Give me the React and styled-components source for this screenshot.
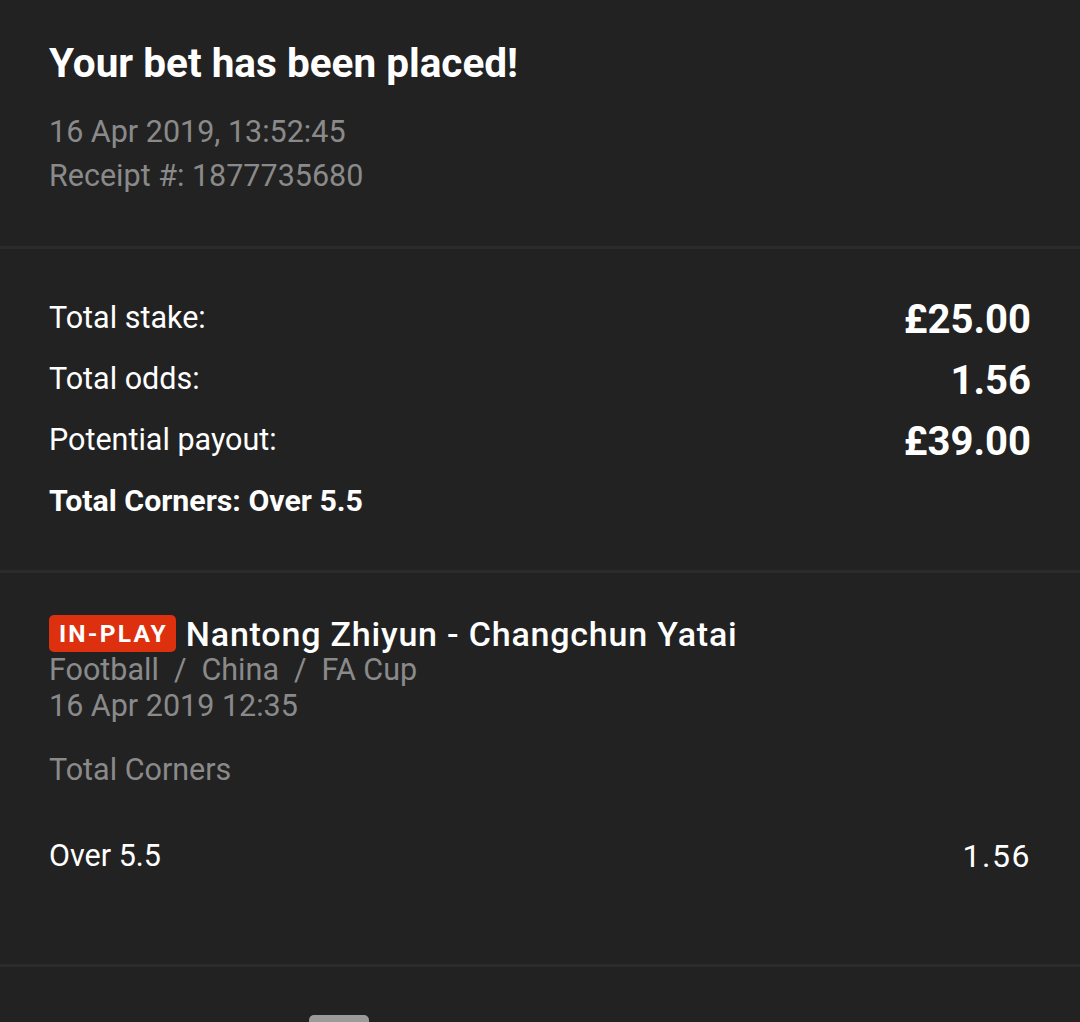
import React from 'react';
import styled, { createGlobalStyle } from 'styled-components';

const GlobalStyle = createGlobalStyle`
  html, body {
    margin: 0;
    padding: 0;
    background: #222222;
  }
  body {
    font-family: Roboto, 'Liberation Sans', sans-serif;
    color: #ffffff;
    -webkit-font-smoothing: antialiased;
  }
`;

const Page = styled.div`
  min-height: 1022px;
  background: #222222;
  overflow: hidden;
`;

const Section = styled.section`
  padding: ${(p) => p.$pad};
  border-bottom: 3px solid #2b2b2b;
`;

const Title = styled.h1`
  margin: 0 0 23px;
  font-size: 40.5px;
  line-height: 48px;
  font-weight: 700;
  color: #ffffff;
`;

const Meta = styled.div`
  font-size: 30.5px;
  line-height: 44px;
  color: #8a8a8a;
`;

const SummaryRow = styled.div`
  display: flex;
  align-items: center;
  justify-content: space-between;
  height: 61px;
`;

const Label = styled.span`
  font-size: ${(p) => (p.$bold ? 30.3 : 30.5)}px;
  font-weight: ${(p) => (p.$bold ? 700 : 400)};
  color: #ffffff;
`;

const Amount = styled.span`
  font-size: 40px;
  font-weight: 700;
  color: #ffffff;
  margin-top: 3px;
`;

const EventHead = styled.div`
  display: flex;
  align-items: center;
  gap: 10px;
  height: 37px;
`;

const Badge = styled.span`
  display: inline-flex;
  align-items: center;
  height: 37px;
  padding: 0 8px 0 10px;
  border-radius: 5px;
  background: #dd300f;
  color: #ffffff;
  font-size: 24.5px;
  font-weight: 700;
  letter-spacing: 2.2px;
`;

const EventName = styled.span`
  font-size: 34px;
  font-weight: 500;
  letter-spacing: 0.8px;
  color: #ffffff;
`;

const Sub = styled.div`
  font-size: 30.5px;
  line-height: 36px;
  color: #8a8a8a;
  margin-top: ${(p) => p.$top || 0}px;
`;

const Crumb = styled.span`
  margin: 0 15px;
`;

const Selection = styled.div`
  display: flex;
  justify-content: space-between;
  align-items: center;
  margin-top: 50px;
  font-size: 30.5px;
  line-height: 36px;
  color: #ffffff;
`;

const Odds = styled.span`
  font-size: 32px;
  letter-spacing: 1.5px;
`;

const Footer = styled.div`
  padding: 48px 0 0 309px;
`;

const Handle = styled.div`
  width: 60px;
  height: 20px;
  border-radius: 5px 5px 0 0;
  background: #9a9a9a;
`;

const summary = [
  { label: 'Total stake:', value: '£25.00' },
  { label: 'Total odds:', value: '1.56' },
  { label: 'Potential payout:', value: '£39.00' },
];

export default function App() {
  return (
    <Page>
      <GlobalStyle />
      <Section $pad="39px 49px 48px">
        <Title>Your bet has been placed!</Title>
        <Meta>16 Apr 2019, 13:52:45</Meta>
        <Meta>Receipt #: 1877735680</Meta>
      </Section>
      <Section $pad="38px 49px 39px">
        {summary.map((row) => (
          <SummaryRow key={row.label}>
            <Label>{row.label}</Label>
            <Amount>{row.value}</Amount>
          </SummaryRow>
        ))}
        <SummaryRow>
          <Label $bold>Total Corners: Over 5.5</Label>
        </SummaryRow>
      </Section>
      <Section $pad="42px 49px 90px">
        <EventHead>
          <Badge>IN-PLAY</Badge>
          <EventName>Nantong Zhiyun - Changchun Yatai</EventName>
        </EventHead>
        <Sub>
          Football<Crumb>/</Crumb>China<Crumb>/</Crumb>FA Cup
        </Sub>
        <Sub>16 Apr 2019 12:35</Sub>
        <Sub $top={28}>Total Corners</Sub>
        <Selection>
          <span>Over 5.5</span>
          <Odds>1.56</Odds>
        </Selection>
      </Section>
      <Footer>
        <Handle />
      </Footer>
    </Page>
  );
}
